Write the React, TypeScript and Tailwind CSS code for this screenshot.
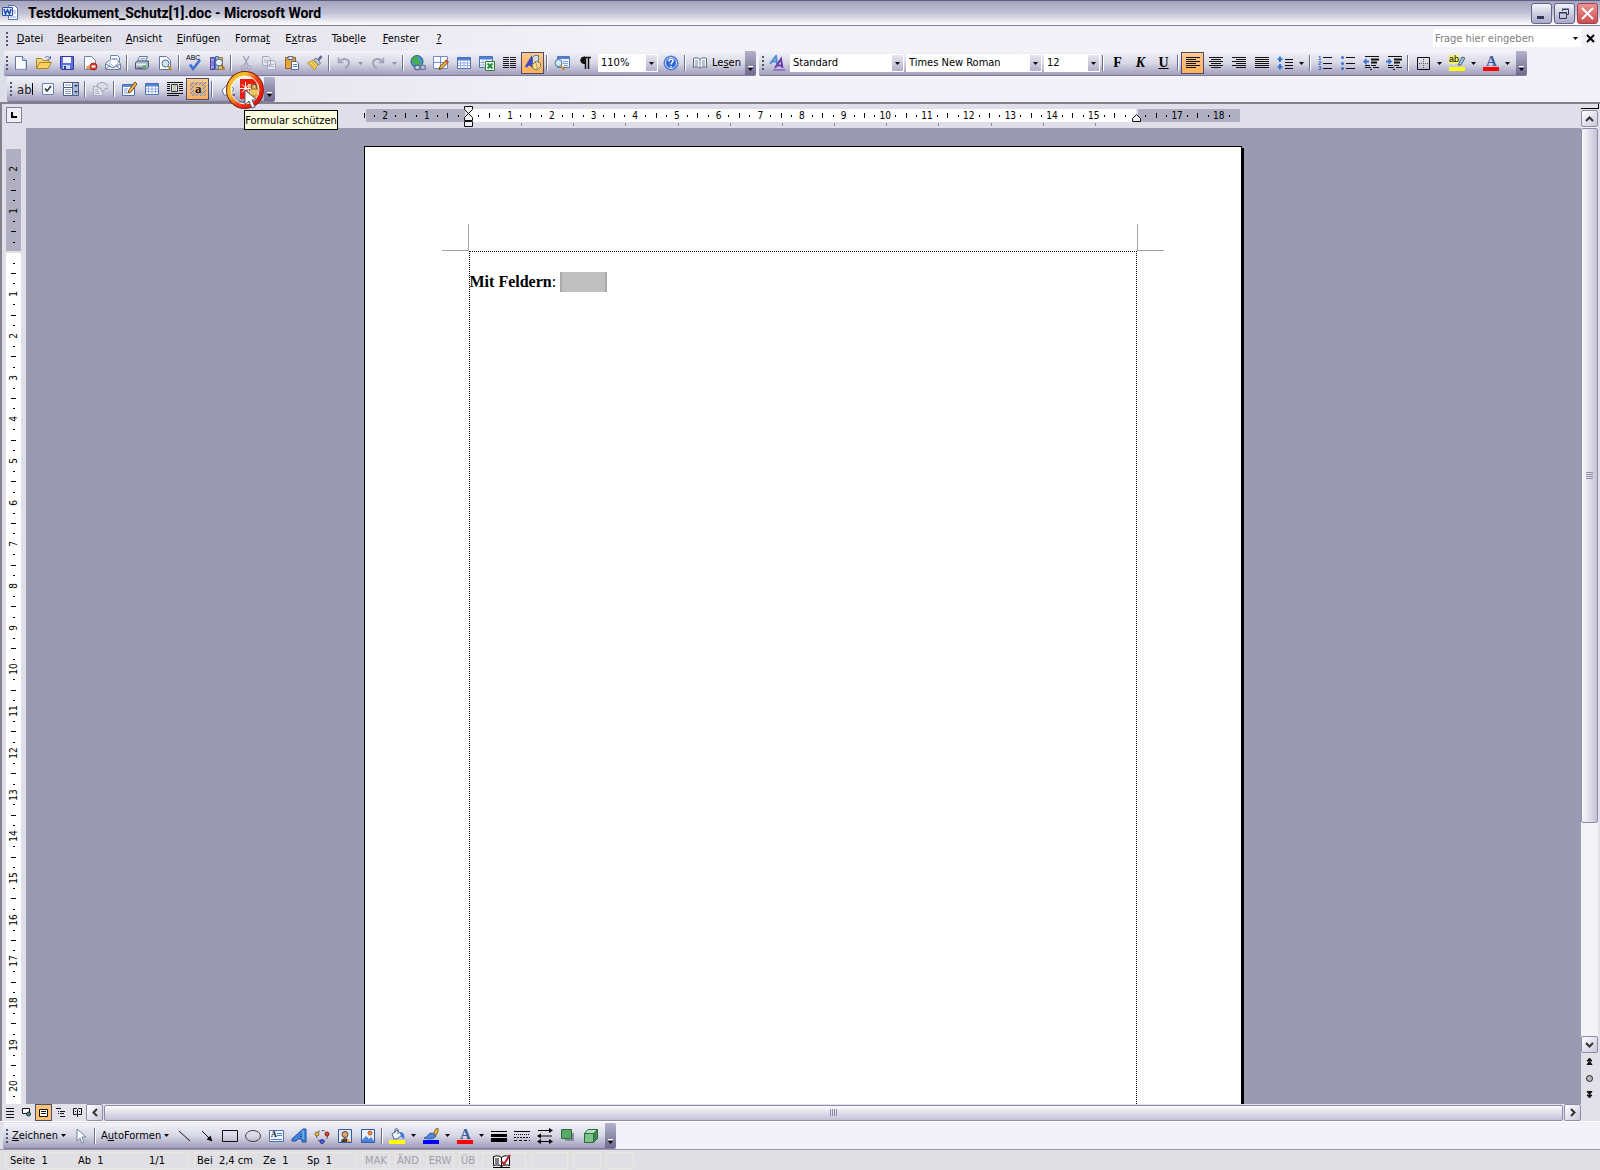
import type { ReactNode } from "react";

const Svg = ({ children, w = 16, h = 16 }: { children: ReactNode; w?: number; h?: number }) => (
  <svg width={w} height={h} viewBox={`0 0 ${w} ${h}`} fill="none" className="shrink-0" aria-hidden="true">
    {children}
  </svg>
);

const sheet = "M2.5 1.5h7l4 4v9h-11z";

const icons: Record<string, ReactNode> = {
  word: (
    <Svg>
      <path d="M6.500.5h6l3 3v11h-9z" fill="#fff" stroke="#4a6fb5" />
      <path d="M11 6h3M11 8h3M8 12h6" stroke="#7fa0d8" />
      <path d="M.5 2.500h10v8H.5z" fill="#dfe9fb" stroke="#2b56b0" />
      <path d="M2 4l1.500 5L5.500 5l2 4L9 4" stroke="#1c46a8" strokeWidth="1.500" />
    </Svg>
  ),
  neu: (
    <Svg>
      <path d={sheet} fill="#fff" stroke="#5f78a8" />
      <path d="M9.500 1.500v4h4" fill="#cddcf5" stroke="#5f78a8" />
      <path d="M12.500 6v8h-9" stroke="#b9c9e6" />
    </Svg>
  ),
  open: (
    <Svg>
      <path d="M.5 13.500v-10h5l1.500 2h6v3" fill="#f5d67b" stroke="#a8822a" />
      <path d="M.5 13.500l3-6h12l-3.500 6z" fill="#fbd05c" stroke="#a8822a" />
      <path d="M9 2.500c2-2 4-1 5 1M14.500 1v3h-3" stroke="#5574a8" />
    </Svg>
  ),
  save: (
    <Svg>
      <path d="M1.500 1.500h13v13h-12l-1-1z" fill="#5b6fe0" stroke="#3336a0" />
      <path d="M4 2h8v6H4z" fill="#f4f7ff" />
      <path d="M4 10h7v4H4z" fill="#cfd6e8" />
      <path d="M5 11h2v3H5z" fill="#2c3f8a" />
    </Svg>
  ),
  permission: (
    <Svg>
      <path d={sheet} fill="#fff" stroke="#7180a6" />
      <path d="M4 13c0-3 4-3 4-1v2H4z" fill="#e8a35a" />
      <circle cx="11.500" cy="11.500" r="3.500" fill="#d9402c" stroke="#a02618" />
      <path d="M9.500 11.500h4" stroke="#fff" strokeWidth="2" />
    </Svg>
  ),
  mail: (
    <Svg>
      <path d="M5.500.5h7l2 2v8h-9z" fill="#fff" stroke="#6b82ae" />
      <path d="M7 3.500h5M7 5.500h6" stroke="#8fb0e0" />
      <path d="M.5 8.500l3-3h9l3 3v6H.5z" fill="#e6edf8" stroke="#70809f" />
      <path d="M5 4.500h8v4l-4 3-4-3z" fill="#fff" stroke="#9eb4d8" />
      <path d="M1 9l7 4 7-4M1 14l4-3.500M15 14l-4-3.500" stroke="#70809f" />
    </Svg>
  ),
  print: (
    <Svg>
      <path d="M5.500 1.500h8l-2 5h-8z" fill="#fff" stroke="#5c78a8" />
      <path d="M6.500 3.500h5M5.500 5h5" stroke="#87a8de" />
      <path d="M1.500 7.500l2-1.500h11v6l-2 2h-11z" fill="#aab4c6" stroke="#49566f" />
      <path d="M2 8.500h10v2H2z" fill="#e6eaf2" />
      <path d="M9 11.500h3" stroke="#30b030" strokeWidth="2" />
      <path d="M3 13h6" stroke="#4a556c" />
    </Svg>
  ),
  preview: (
    <Svg>
      <path d={sheet} fill="#fff" stroke="#5f78a8" />
      <circle cx="8.500" cy="8.500" r="3.500" fill="#cfe6fa" stroke="#5a6d90" />
      <path d="M11 11l3.500 4" stroke="#c98a2c" strokeWidth="2" />
    </Svg>
  ),
  spell: (
    <Svg>
      <text x="0" y="5" fontSize="7" fontFamily="Liberation Sans, sans-serif" fill="#000">ABC</text>
      <path d="M4 9.500l3 4.500 7-9" stroke="#3a70d0" strokeWidth="2.500" />
    </Svg>
  ),
  research: (
    <Svg>
      <path d="M1.500 2.500h4v12h-4z" fill="#7f7ad8" stroke="#4a469a" />
      <path d="M2 5h3M2 12h3" stroke="#c9c6f6" />
      <path d="M6.500 1.500h3v13h-3z" fill="#8fb6ec" stroke="#4670a8" />
      <path d="M9.500 2.500h4v12h-4z" fill="#e2c56a" stroke="#9a7c30" />
      <circle cx="10" cy="7.500" r="3.500" fill="#e4f2ff" stroke="#4f6484" />
      <path d="M12.500 10l3 4.500" stroke="#a8742a" strokeWidth="2" />
    </Svg>
  ),
  cut: (
    <Svg>
      <path d="M5.500 1l4 9M11 1L6.500 10" stroke="#a3a3b8" strokeWidth="1.500" />
      <circle cx="5" cy="12.500" r="2" stroke="#a3a3b8" />
      <circle cx="11" cy="12.500" r="2" stroke="#a3a3b8" />
    </Svg>
  ),
  copy: (
    <Svg>
      <path d="M1.500 1.500h6l2 2v7h-8zM6.500 5.500h6l2 2v7h-8z" fill="#e6e6f0" stroke="#a8a8bd" />
      <path d="M8 9.500h5M8 11.500h5M3 5h3M3 7h3" stroke="#b4b4c8" />
    </Svg>
  ),
  paste: (
    <Svg>
      <path d="M1.500 2.500h10v11h-10z" fill="#e4a63a" stroke="#8c6420" />
      <path d="M4 1.500h5v3H4z" fill="#d9dbe8" stroke="#6a6a80" />
      <path d="M7.500 6.500h5l2 2v6h-7z" fill="#fff" stroke="#4a6496" />
      <path d="M9 9.500h4M9 11.500h4" stroke="#5880c8" />
    </Svg>
  ),
  painter: (
    <Svg>
      <path d="M11.500 5l3-4" stroke="#5d6592" strokeWidth="2.500" />
      <path d="M9 3l4.500 5-2 2-5-5z" fill="#c4c9da" stroke="#686e88" />
      <path d="M6 5l5 5-3.500 5L.5 8z" fill="#f4dc6c" stroke="#ac8c2c" />
      <path d="M3 8.500l4.500 4.500M5 7l4 4" stroke="#b89430" />
    </Svg>
  ),
  undo: (
    <Svg>
      <path d="M3 7c4-5 10-3 10 1 0 3-2 4-4 5" stroke="#a0a0b6" strokeWidth="2" />
      <path d="M2.500 2.500v5h5" stroke="#a0a0b6" strokeWidth="1.500" />
    </Svg>
  ),
  redo: (
    <Svg>
      <path d="M13 7C9 2 3 4 3 8c0 3 2 4 4 5" stroke="#a0a0b6" strokeWidth="2" />
      <path d="M13.500 2.500v5h-5" stroke="#a0a0b6" strokeWidth="1.500" />
    </Svg>
  ),
  link: (
    <Svg>
      <circle cx="7" cy="6.500" r="6" fill="#4d8fe0" stroke="#2d5f6c" />
      <path d="M3 3c3-3 6-2 5 1s3 1 3 3-3 1-3 5c-3-1-2-3-4-4S1 5 3 3z" fill="#45b045" />
      <rect x="4.500" y="10.500" width="6" height="4" rx="2" fill="#dde4f0" stroke="#53668c" strokeWidth="1.500" />
      <rect x="9.500" y="10.500" width="6" height="4" rx="2" stroke="#6e80a4" strokeWidth="1.500" />
    </Svg>
  ),
  drawTable: (
    <Svg>
      <path d="M.5 1.500h14v12H.5z" fill="#fff" stroke="#6e8cc8" />
      <path d="M7.500 1.500v12M.5 7.500h14" stroke="#6e8cc8" />
      <path d="M6 14.500l1-3 6-6 2 2-6 6z" fill="#f0b43c" stroke="#6b4a1c" />
      <path d="M12.500 5l2.500 2.500" stroke="#d04a34" strokeWidth="2" />
    </Svg>
  ),
  table: (
    <Svg>
      <path d="M1.500 2.500h13v11h-13z" fill="#fff" stroke="#4b70b8" />
      <path d="M2 3h12v2.500H2z" fill="#4f7edc" />
      <path d="M4.500 5.500v8M8 5.500v8M11.500 5.500v8M2 8h12M2 10.500h12" stroke="#97b2e2" />
    </Svg>
  ),
  excel: (
    <Svg>
      <path d="M.5 1.500h13v11H.5z" fill="#fff" stroke="#4b70b8" />
      <path d="M1 2h12v2.500H1z" fill="#4f7edc" />
      <path d="M4 4.500v8M8 4.500v8M1 7.500h12M1 10h12" stroke="#97b2e2" />
      <path d="M6.500 6.500h9v9h-9z" fill="#f2fff2" stroke="#2a7a35" />
      <path d="M8.500 8.500l5 5M13.500 8.500l-5 5" stroke="#2c8a3c" strokeWidth="2" />
    </Svg>
  ),
  columns: (
    <Svg>
      <path d="M1 2.500h6M1 4.500h6M1 6.500h6M1 8.500h6M1 10.500h6M1 12.500h6M8 2.500h6M8 4.500h6M8 6.500h6M8 8.500h6M8 10.500h6M8 12.500h6" stroke="#1a1a1a" />
    </Svg>
  ),
  drawing: (
    <Svg>
      <path d="M7.500 2l2-1.500h4v7l-2 1.500h-4z" fill="#d4dae8" stroke="#65749a" />
      <path d="M1 12L6 4l1 8M3 9.500h4" stroke="#4048c0" strokeWidth="2.500" />
      <path d="M7.500 9.500L11 6l4.500 2v3.500L12 15l-4.500-1.500z" fill="#f2dc8c" stroke="#8b7a4c" />
      <path d="M10 6.500l2 4L12 15" stroke="#a89460" />
    </Svg>
  ),
  docMap: (
    <Svg>
      <path d="M3.500 1.500h12v11h-12z" fill="#eef4ff" stroke="#5577b4" />
      <path d="M4 2h11v2H4z" fill="#4f80dc" />
      <path d="M9 6.500h5M9 8.500h5M10 10.500h4" stroke="#7ba0de" />
      <circle cx="4.500" cy="8" r="3.500" fill="#cdeef4" stroke="#56749a" />
      <path d="M7 11l3.500 4" stroke="#c98a2c" strokeWidth="2" />
    </Svg>
  ),
  para: (
    <Svg>
      <path d="M7 2.500h7M8.500 2v12M11.500 2v12" stroke="#111" strokeWidth="1.500" />
      <path d="M8 2H7a3 3 0 000 6.500h1z" fill="#111" stroke="#111" />
    </Svg>
  ),
  help: (
    <Svg>
      <circle cx="8" cy="8" r="7" fill="#2f68d8" stroke="#4f80d0" />
      <circle cx="8" cy="8" r="5.500" stroke="#dbe8ff" />
      <path d="M6 6.500c0-3 4-3 4-.5 0 1.500-2 1.500-2 3.500M8 11v1.500" stroke="#fff" strokeWidth="1.500" />
    </Svg>
  ),
  read: (
    <Svg>
      <path d="M1.500 3.500c2-1 5-1 6.500 1 1.500-2 4.500-2 6.500-1v9c-2-1-5-1-6.500 1-1.500-2-4.500-2-6.500-1z" fill="#f5f7fb" stroke="#5b6784" />
      <path d="M8 4v9M3 6h3M3 8h3M3 10h3M10 6h3M10 8h3M10 10h3" stroke="#7c8aa8" />
    </Svg>
  ),
  styles: (
    <Svg>
      <path d="M1 9L7 1l1 8M3.500 6.500H8" stroke="#4a8ed8" strokeWidth="2" />
      <path d="M6 13l6-9 1.500 9M8.500 10.500h5" stroke="#6b3fae" strokeWidth="2" />
      <path d="M4 15h12" stroke="#6b3fae" />
    </Svg>
  ),
  alignLeft: <Svg><path d="M1 2.500h14M1 4.500h10M1 6.500h14M1 8.500h10M1 10.500h14M1 12.500h10" stroke="#111" /></Svg>,
  alignCenter: <Svg><path d="M1 2.500h14M3 4.500h10M1 6.500h14M3 8.500h10M1 10.500h14M3 12.500h10" stroke="#111" /></Svg>,
  alignRight: <Svg><path d="M1 2.500h14M5 4.500h10M1 6.500h14M5 8.500h10M1 10.500h14M5 12.500h10" stroke="#111" /></Svg>,
  justify: <Svg><path d="M1 2.500h14M1 4.500h14M1 6.500h14M1 8.500h14M1 10.500h14M1 12.500h14" stroke="#111" /></Svg>,
  spacing: (
    <Svg>
      <path d="M8 4.500h8M8 7.500h8M8 10.500h8M8 13.500h8" stroke="#111" />
      <path d="M0 5l3-4 3 4zM0 11l3 4 3-4zM2 5h2v2H2zM2 9h2v2H2z" fill="#3970d0" />
    </Svg>
  ),
  numbered: (
    <Svg>
      <path d="M6 2.500h9M6 8.500h9M6 13.500h9" stroke="#111" />
      <text x="1" y="5" fontSize="6" fontFamily="Liberation Sans, sans-serif" fontWeight="700" fill="#2f62c4">1</text>
      <text x="1" y="10" fontSize="6" fontFamily="Liberation Sans, sans-serif" fontWeight="700" fill="#2f62c4">2</text>
      <text x="1" y="15" fontSize="6" fontFamily="Liberation Sans, sans-serif" fontWeight="700" fill="#2f62c4">3</text>
    </Svg>
  ),
  bullets: (
    <Svg>
      <path d="M6 2.500h9M6 8.500h9M6 13.500h9" stroke="#111" />
      <circle cx="2.500" cy="2.500" r="1.500" fill="#3970d0" />
      <circle cx="2.500" cy="8.500" r="1.500" fill="#3970d0" />
      <circle cx="2.500" cy="13.500" r="1.500" fill="#3970d0" />
    </Svg>
  ),
  dedent: (
    <Svg>
      <path d="M2 1.500h14M8 10.500h5M2 10.500h5M2 12.500h6M10 12.500h6M7 14.500h2" stroke="#111" />
      <path d="M8 4.500h8M8 7.500h6" stroke="#111" strokeWidth="2" />
      <path d="M0 6.500L3.500 3v2.500H6v2H3.500V10z" fill="#3970d0" />
    </Svg>
  ),
  indent: (
    <Svg>
      <path d="M2 1.500h14M8 10.500h5M2 10.500h5M2 12.500h6M10 12.500h6M7 14.500h2" stroke="#111" />
      <path d="M8 4.500h8M8 7.500h6" stroke="#111" strokeWidth="2" />
      <path d="M6 6.500L2.500 3v2.500H0v2h2.500V10z" fill="#3970d0" />
    </Svg>
  ),
  borders: (
    <Svg>
      <path d="M2.500 2.500h12v12h-12z" stroke="#111" />
      <path d="M8.500 4v9M4 8.500h9" stroke="#555" strokeDasharray="1 1" />
    </Svg>
  ),
  highlight: (
    <Svg>
      <path d="M0 0h10v9H0z" fill="#f4f36a" />
      <text x="0" y="7" fontSize="9" fontFamily="Liberation Sans, sans-serif" fill="#000">ab</text>
      <path d="M9 10l4-8 3 1-4 7z" fill="#9cc4e0" stroke="#4a6684" />
      <path d="M0 12h16v4H0z" fill="#ff0" />
    </Svg>
  ),
  fontColor: (
    <Svg>
      <text x="3" y="11" fontSize="15" fontFamily="Liberation Serif, serif" fontWeight="700" fill="#3c5c9e">A</text>
      <path d="M0 12h16v4H0z" fill="#f00" />
    </Svg>
  ),
  textField: (
    <Svg>
      <text x="0" y="13" fontSize="13" fontFamily="DejaVu Sans Condensed, sans-serif" fill="#222">ab</text>
      <path d="M15.500 2v12" stroke="#000" />
    </Svg>
  ),
  checkField: (
    <Svg>
      <path d="M2.500 2.500h11v11h-11z" fill="#f4f6fc" stroke="#6f86b0" />
      <path d="M5 7.500l2 2.500 4-5" stroke="#333" strokeWidth="1.500" />
    </Svg>
  ),
  dropField: (
    <Svg>
      <path d="M.5 1.500h15v5H.5z" fill="#fff" stroke="#4c5f88" />
      <path d="M.5 6.500h9v8h-9z" fill="#fff" stroke="#4c5f88" />
      <path d="M9.500 1.500h6v13h-6z" fill="#aebdda" stroke="#4c5f88" />
      <path d="M2 8.500h6M2 10.500h6M2 12.500h6M2 4h6" stroke="#8496ba" />
      <path d="M11 4h4l-2 2zM11 10h4l-2 2z" fill="#1f2d50" />
    </Svg>
  ),
  options: (
    <Svg>
      <path d="M1.500 5.500h9v9h-9z" fill="#e6e6f0" stroke="#a8a8bc" />
      <path d="M5 3.500l4-2h3l4 3v3h-3l-2 3-2-1V7H6z" fill="#dcdce8" stroke="#a0a0b6" />
      <path d="M3 10.500h4M3 12.500h5M3 8.500h3" stroke="#acacc0" />
    </Svg>
  ),
  editField: (
    <Svg>
      <path d="M1.500 3.500h12v11h-12z" fill="#fff" stroke="#4b70b8" />
      <path d="M2 4h11v2H2z" fill="#5b8ae0" />
      <path d="M3 8h4M3 10h3M3 12h4" stroke="#7b9cd8" />
      <path d="M7 12l1-3 6-8 2 2-6 8z" fill="#f4bd46" stroke="#6b4a1c" />
    </Svg>
  ),
  frame: (
    <Svg>
      <path d="M4.500 3.500h6v7h-6z" fill="#e4edda" stroke="#333" />
      <path d="M0 1.500h16M0 3.500h3M0 5.500h3M0 7.500h3M0 9.500h3M12 3.500h4M12 5.500h4M12 7.500h4M12 9.500h4M0 12.500h16M0 14.500h12" stroke="#111" />
      <path d="M6 5h3M6 7h3M6 9h3" stroke="#9aa890" />
    </Svg>
  ),
  shading: (
    <Svg>
      <path d="M0 1h16v14H0z" fill="#e4b47c" />
      <path d="M0 5l4-4M0 9l8-8M0 13l4-4M2 15l3-3M6 15l3-3M10 15l6-6M14 15l2-2M12 5l4-4M9 4l3-3M13 8l3-3" stroke="#5e86c8" />
      <path d="M4 4h8v8H4z" fill="#eebc84" />
      <text x="5" y="12" fontSize="13" fontFamily="Liberation Serif, serif" fontWeight="700" fill="#111">a</text>
    </Svg>
  ),
  reset: (
    <Svg>
      <path d="M3 9l6-6 6 5-6 6H5z" fill="#fff" stroke="#5878a8" />
      <path d="M9 14h7" stroke="#111" />
    </Svg>
  ),
  lock: (
    <Svg w={20} h={20}>
      <path d="M0 0h17v20H0z" fill="#ee1c10" />
      <path d="M8 5h12v14H8z" fill="#f4b47c" />
      <path d="M11.500 10V7.500c0-3.500 5-3.500 5 0V10" stroke="#6c5a30" strokeWidth="1.500" />
      <path d="M9.500 10h9v7h-9z" fill="#ecc75c" stroke="#8c6c2c" />
      <path d="M5.500 3v13M0 9.500h11M2 5.500l8 8M9 5.500l-7 8" stroke="#fff" />
    </Svg>
  ),
  pointer: <Svg><path d="M4 1v12l3-3 2 5 2-1-2-5h4z" fill="#fff" stroke="#6f83a6" /></Svg>,
  line: <Svg><path d="M3 3l11 10" stroke="#111" /></Svg>,
  arrow: <Svg><path d="M3 3l7 7" stroke="#111" /><path d="M13.500 13.500l-2-6-4 4z" fill="#111" /></Svg>,
  rect: <Svg><path d="M.5 2.500h15v11H.5z" stroke="#111" /></Svg>,
  ellipse: <Svg><ellipse cx="8" cy="8" rx="7.500" ry="5.500" stroke="#444" /></Svg>,
  textBox: (
    <Svg>
      <path d="M1.500 2.500h14v11h-14z" fill="#eaf3ff" stroke="#4f74b0" />
      <text x="3" y="9" fontSize="8" fontFamily="Liberation Serif, serif" fontWeight="700" fill="#111">A</text>
      <path d="M9 5.500h5M9 7.500h5M3 11.500h11" stroke="#5b7fc0" />
    </Svg>
  ),
  wordArt: (
    <Svg>
      <path d="M1 11L12 1h3v13h-4v-3H7l-2 2H1zM9 8.500h2V6z" fill="#3c86e0" stroke="#1f4c9c" />
      <path d="M12 2v9" stroke="#9cc8f8" />
    </Svg>
  ),
  diagram: (
    <Svg>
      <circle cx="8" cy="8" r="5.500" stroke="#445" strokeDasharray="3 2" />
      <circle cx="3" cy="6" r="2" fill="#e8c040" stroke="#866c20" />
      <circle cx="13" cy="6" r="2" fill="#d84030" stroke="#882418" />
      <circle cx="8" cy="13.500" r="2" fill="#4a60e0" stroke="#2a3890" />
    </Svg>
  ),
  clipArt: (
    <Svg>
      <path d="M1.500 1.500h13v13h-13z" fill="#dfe9f8" stroke="#2e5aa4" />
      <path d="M4 14c0-5 8-5 8 0z" fill="#4b3c30" />
      <circle cx="8" cy="6.500" r="3" fill="#e0a870" stroke="#5b4230" />
      <path d="M10 10l4 4h-4z" fill="#e8a040" />
    </Svg>
  ),
  picture: (
    <Svg>
      <path d="M1.500 1.500h13v13h-13z" fill="#e8f1ff" stroke="#2e5aa4" />
      <path d="M2 12l4-4 3 3 2-2 3 4v1H2z" fill="#4f83d8" />
      <circle cx="10" cy="5" r="2" fill="#f09040" stroke="#b85820" />
    </Svg>
  ),
  fill: (
    <Svg>
      <path d="M3 6l5-4 5 5-5 4H5z" fill="#f2f6fc" stroke="#4e648c" />
      <path d="M6 5V2c0-2 3-2 3 0v4" stroke="#4e648c" />
      <path d="M11 4c4 0 5 4 4 7-2-1-3-2-4-7z" fill="#3b78d8" />
      <path d="M0 12h16v4H0z" fill="#ff0" />
    </Svg>
  ),
  brush: (
    <Svg>
      <path d="M10.500 5l3-5 2 1-2 6z" fill="#f0bc40" stroke="#8b682a" />
      <path d="M1 10c3 0 4-5 8-5l4 3c-2 4-8 3-12 2z" fill="#4f88dc" stroke="#30589c" />
      <path d="M0 12h16v4H0z" fill="#00f" />
    </Svg>
  ),
  weight: <Svg><path d="M0 3.500h16" stroke="#000" /><path d="M0 7.500h16" stroke="#000" strokeWidth="3" /><path d="M0 12h16" stroke="#000" strokeWidth="4" /></Svg>,
  dashes: (
    <Svg>
      <path d="M0 3.500h16" stroke="#000" />
      <path d="M0 6.500h16" stroke="#000" strokeDasharray="1 1" />
      <path d="M0 9.500h16" stroke="#000" strokeDasharray="2 1" />
      <path d="M0 12.500h16" stroke="#000" strokeDasharray="3 2" />
    </Svg>
  ),
  arrows: (
    <Svg>
      <path d="M1 2.500h14M1 8h14M1 13.500h14" stroke="#000" />
      <path d="M12 0l4 2.500L12 5zM4 5.500L0 8l4 2.500zM12 11l4 2.500-4 2.500zM4 11l-4 2.500L4 16z" fill="#000" />
    </Svg>
  ),
  shadow: <Svg><path d="M5 5h9v8H5z" fill="#8a8aa0" /><path d="M1.500 1.500h10v9h-10z" fill="#58a868" stroke="#2c6c3c" /></Svg>,
  cube: (
    <Svg>
      <path d="M1.500 5.500h9v9h-9z" fill="#7cc48a" stroke="#2c6c3c" />
      <path d="M1.500 5.500l3.500-4h9.500l-4 4z" fill="#b4e0bc" stroke="#2c6c3c" />
      <path d="M10.500 5.500l4-4v9l-4 4z" fill="#3f8a50" stroke="#2c6c3c" />
    </Svg>
  ),
  proof: (
    <Svg w={20} h={14}>
      <path d="M1.500 2.500c3-1 6-1 8 1 2-2 5-2 8-1v9c-3-1-6-1-8 1-2-2-5-2-8-1z" fill="#fff" stroke="#000" />
      <path d="M9.500 3v10M3 5h4M3 7h4M3 9h4M1 13.500h17" stroke="#000" />
      <path d="M9 7l3 3 6-9" stroke="#b02020" strokeWidth="2" />
    </Svg>
  ),
};

const Grip = () => (
  <span className="mr-px flex w-[2px] shrink-0 flex-col gap-[2px]">
    {[0, 1, 2, 3].map((i) => (
      <span key={i} className="size-[2px] bg-[#54526e]" />
    ))}
  </span>
);

const Sep = () => <span className="mx-[2px] h-4 w-[2px] shrink-0 border-l border-r border-l-[#6e6d8f] border-r-white" />;

const Btn = ({ icon, label, active }: { icon: string; label: string; active?: boolean }) => (
  <button
    type="button"
    aria-label={label}
    className={
      active
        ? "flex h-[22px] w-[23px] shrink-0 items-center justify-center border border-[#4b4b6f] bg-linear-to-b from-[#ffc98b] to-[#ffb05a]"
        : "flex h-[22px] w-[23px] shrink-0 items-center justify-center"
    }
  >
    {icons[icon]}
  </button>
);

const Triangle = ({ muted }: { muted?: boolean }) => (
  <Svg w={5} h={3}>
    <path d="M0 0h5L2.500 3z" fill={muted ? "#9090a6" : "#000"} />
  </Svg>
);

const Drop = ({ label, muted }: { label: string; muted?: boolean }) => (
  <button type="button" aria-label={label} className="flex h-[22px] w-[11px] shrink-0 items-center justify-center">
    <Triangle muted={muted} />
  </button>
);

const Overflow = () => (
  <button
    type="button"
    aria-label="Optionen für Symbolleisten"
    className="flex w-[11px] shrink-0 flex-col items-center justify-end gap-px self-stretch rounded-r-[2px] bg-linear-to-b from-[#b4b2ca] to-[#6f6b8e] pb-1"
  >
    <span className="h-px w-[5px] bg-white" />
    <Triangle />
  </button>
);

const Combo = ({ label, value, width }: { label: string; value: string; width: string }) => (
  <span className={`relative ml-[2px] flex h-[18px] shrink-0 ${width}`}>
    <select aria-label={label} className="h-full w-full appearance-none bg-white pl-[3px] text-[11px] leading-4 outline-none">
      <option>{value}</option>
    </select>
    <span className="pointer-events-none absolute inset-y-px right-px flex w-[11px] items-center justify-center bg-linear-to-b from-[#e6e6f0] to-[#b3b1ca]">
      <Triangle />
    </span>
  </span>
);

const Letter = ({ label, text, style }: { label: string; text: string; style: string }) => (
  <button
    type="button"
    aria-label={label}
    className={`h-[22px] w-[23px] shrink-0 text-center font-['Liberation_Serif',serif] text-[14px] leading-[20px] font-bold ${style}`}
  >
    {text}
  </button>
);

const bar = "flex items-center border-b border-[#7c7aa0] bg-linear-to-b from-[#f3f3fa] via-[#d8d8e6] to-[#a09dbb] rounded-[2px]";

const menus = [
  { pre: "", key: "D", post: "atei", width: "w-[42px]" },
  { pre: "", key: "B", post: "earbeiten", width: "w-[67px]" },
  { pre: "", key: "A", post: "nsicht", width: "w-[52px]" },
  { pre: "", key: "E", post: "infügen", width: "w-[57px]" },
  { pre: "Forma", key: "t", post: "", width: "w-[51px]" },
  { pre: "E", key: "x", post: "tras", width: "w-[46px]" },
  { pre: "Tabe", key: "l", post: "le", width: "w-[50px]" },
  { pre: "", key: "F", post: "enster", width: "w-[54px]" },
  { pre: "", key: "?", post: "", width: "w-[22px]" },
];

const titleBtn = "flex size-[21px] items-center justify-center rounded-[3px] border";

const TitleBar = () => (
  <header className="flex h-[26px] shrink-0 items-center border-t border-b border-t-[#5f5d80] border-b-[#7b7b98] bg-linear-to-b from-[#a5a4bf] via-[#c2c1d4] to-white pl-[2px]">
    {icons.word}
    <h1 className="ml-[10px] flex-1 font-[Roboto,sans-serif] text-[14px] leading-5 font-bold">
      Testdokument_Schutz[1].doc - Microsoft Word
    </h1>
    <div className="flex gap-[2px] pr-[2px]">
      <button type="button" aria-label="Minimieren" className={`${titleBtn} border-[#62648c] bg-linear-to-b from-[#f4f4fa] to-[#a9a9c8]`}>
        <Svg w={13} h={13}><path d="M2 9h7v3H2z" fill="#33385c" /></Svg>
      </button>
      <button type="button" aria-label="Wiederherstellen" className={`${titleBtn} border-[#62648c] bg-linear-to-b from-[#f4f4fa] to-[#a9a9c8]`}>
        <Svg w={13} h={13}><path d="M4.500 4V2.500h6v5H9M4 2h7M1.500 5.500h7v6h-7zM1 6h8" stroke="#33385c" /></Svg>
      </button>
      <button type="button" aria-label="Schließen" className={`${titleBtn} border-[#a04048] bg-linear-to-b from-[#e89490] to-[#cc4c50]`}>
        <Svg w={13} h={13}><path d="M1 1l11 11M12 1L1 12" stroke="#fff" strokeWidth="2" /></Svg>
      </button>
    </div>
  </header>
);

const MenuBar = () => (
  <nav className="flex h-[25px] items-center pl-[6px]">
    <Grip />
    <div className="flex flex-1">
      {menus.map((m) => (
        <button key={m.key} type="button" className={`h-5 shrink-0 text-center ${m.width}`}>
          {m.pre}<u>{m.key}</u>{m.post}
        </button>
      ))}
    </div>
    <input aria-label="Frage hier eingeben" placeholder="Frage hier eingeben" className="mb-px h-[18px] w-[136px] bg-white px-[2px] outline-none placeholder:text-[#808080]" />
    <button type="button" aria-label="Fragen anzeigen" className="mb-px flex h-[18px] w-[12px] items-center justify-center bg-white"><Triangle /></button>
    <button type="button" aria-label="Fenster schließen" className="flex w-[19px] justify-center">
      <Svg w={9} h={9}><path d="M1 1l7 7M8 1L1 8" stroke="#000" strokeWidth="2" /></Svg>
    </button>
  </nav>
);

const StandardBar = () => (
  <div className={`${bar} pl-[2px]`}>
    <Grip />
    <Btn icon="neu" label="Neu" />
    <Btn icon="open" label="Öffnen" />
    <Btn icon="save" label="Speichern" />
    <Btn icon="permission" label="Berechtigung" />
    <Btn icon="mail" label="E-Mail" />
    <Sep />
    <Btn icon="print" label="Drucken" />
    <Btn icon="preview" label="Seitenansicht" />
    <Sep />
    <Btn icon="spell" label="Rechtschreibung" />
    <Btn icon="research" label="Recherchieren" />
    <Sep />
    <Btn icon="cut" label="Ausschneiden" />
    <Btn icon="copy" label="Kopieren" />
    <Btn icon="paste" label="Einfügen" />
    <Btn icon="painter" label="Format übertragen" />
    <Sep />
    <Btn icon="undo" label="Rückgängig" />
    <Drop label="Rückgängig Liste" muted />
    <Btn icon="redo" label="Wiederholen" />
    <Drop label="Wiederholen Liste" muted />
    <Sep />
    <Btn icon="link" label="Hyperlink" />
    <Btn icon="drawTable" label="Tabellen und Rahmen" />
    <Btn icon="table" label="Tabelle einfügen" />
    <Btn icon="excel" label="Excel-Tabelle einfügen" />
    <Btn icon="columns" label="Spalten" />
    <Btn icon="drawing" label="Zeichnen" active />
    <Sep />
    <Btn icon="docMap" label="Dokumentstruktur" />
    <Btn icon="para" label="Formatierungszeichen" />
    <Combo label="Zoom" value="110%" width="w-[60px]" />
    <span className="w-px" />
    <Btn icon="help" label="Hilfe" />
    <Sep />
    <button type="button" className="flex h-[22px] w-[57px] items-center justify-center gap-1">
      {icons.read}
      <span>Le<u>s</u>en</span>
    </button>
    <Overflow />
  </div>
);

const FormatBar = () => (
  <div className={`${bar} ml-[3px] pl-[3px]`}>
    <Grip />
    <Btn icon="styles" label="Formatvorlagen" />
    <Combo label="Formatvorlage" value="Standard" width="w-[114px]" />
    <Combo label="Schriftart" value="Times New Roman" width="w-[136px]" />
    <Combo label="Schriftgrad" value="12" width="w-[56px]" />
    <Sep />
    <Letter label="Fett" text="F" style="" />
    <Letter label="Kursiv" text="K" style="italic" />
    <Letter label="Unterstrichen" text="U" style="underline" />
    <Sep />
    <Btn icon="alignLeft" label="Linksbündig" active />
    <Btn icon="alignCenter" label="Zentriert" />
    <Btn icon="alignRight" label="Rechtsbündig" />
    <Btn icon="justify" label="Blocksatz" />
    <Btn icon="spacing" label="Zeilenabstand" />
    <Drop label="Zeilenabstand Liste" />
    <Sep />
    <Btn icon="numbered" label="Nummerierung" />
    <Btn icon="bullets" label="Aufzählungszeichen" />
    <Btn icon="dedent" label="Einzug verkleinern" />
    <Btn icon="indent" label="Einzug vergrößern" />
    <Sep />
    <Btn icon="borders" label="Rahmenlinie" />
    <Drop label="Rahmenlinie Liste" />
    <Btn icon="highlight" label="Hervorheben" />
    <Drop label="Hervorheben Liste" />
    <Btn icon="fontColor" label="Schriftfarbe" />
    <Drop label="Schriftfarbe Liste" />
    <span className="w-[3px]" />
    <Overflow />
  </div>
);

const FormBar = () => (
  <div className={`${bar} relative ml-[7px] h-[25px] w-[268px] pl-[3px]`}>
    <Grip />
    <Btn icon="textField" label="Textformularfeld" />
    <Btn icon="checkField" label="Kontrollkästchen" />
    <Btn icon="dropField" label="Dropdown" />
    <Sep />
    <Btn icon="options" label="Formularfeldoptionen" />
    <Sep />
    <Btn icon="editField" label="Tabelle zeichnen" />
    <Btn icon="table" label="Tabelle einfügen" />
    <Btn icon="frame" label="Positionsrahmen einfügen" />
    <Btn icon="shading" label="Formularfeld-Schattierung" active />
    <Sep />
    <Btn icon="reset" label="Formularfelder zurücksetzen" />
    <Btn icon="lock" label="Formular schützen" />
    <span className="flex-1" />
    <Overflow />
    {/* click marker, mouse pointer and tooltip */}
    <span className="pointer-events-none absolute -top-[7px] left-[218px] z-20">
      <Svg w={40} h={40}>
        <defs>
          <linearGradient id="ring" x1="4" y1="6" x2="36" y2="30" gradientUnits="userSpaceOnUse">
            <stop offset=".3" stopColor="#f8bc28" />
            <stop offset=".6" stopColor="#f04018" />
            <stop offset="1" stopColor="#f80808" />
          </linearGradient>
        </defs>
        <circle cx="20" cy="20" r="18" stroke="#7c2010" strokeWidth="2" />
        <circle cx="20" cy="20" r="16" stroke="url(#ring)" strokeWidth="4" />
        <circle cx="20" cy="20" r="14" stroke="#fff6d8" />
        <path d="M20 20v15l4-4 3 7 3-1-3-7h5z" fill="#fff" stroke="#55576e" />
      </Svg>
    </span>
    <span role="tooltip" className="absolute top-[33px] left-[237px] z-30 flex h-5 w-[94px] items-center justify-center border border-black bg-[#ffffe1] pt-px whitespace-nowrap">
      Formular schützen
    </span>
  </div>
);

// ruler marks sit every quarter centimetre
const marks = (from: number, to: number) => Array.from({ length: to - from + 1 }, (_, i) => from + i);

const HorizontalRuler = () => (
  <div className="flex h-6 flex-1 justify-center pt-[5px]">
    <div className="relative h-[13px] w-[877px] shrink-0 bg-[linear-gradient(to_right,#e0dfe9_0_1px,#b0afc1_1px_100px,#e0dfe9_100px_104px,#fff_104px_771px,#e0dfe9_771px_773px,#b0afc1_773px_875px,#e0dfe9_875px)]">
      <div className="-ml-[6px] flex h-full w-[875px]">
        {marks(-10, 73).map((k) => (
          <span key={k} className="flex w-0 flex-1 items-center justify-center">
            {k === 0 || k === 64 ? null : k % 4 === 0 ? (
              <span className="text-[10px] leading-3">{Math.abs(k / 4)}</span>
            ) : (
              <span className={k % 2 === 0 ? "h-[5px] w-px bg-black" : "h-[2px] w-px bg-black"} />
            )}
          </span>
        ))}
      </div>
      <span className="absolute -top-[3px] left-[99px]">
        <Svg w={10} h={22}>
          <path d="M.5.5h8v3l-4 4-4-4zM.5 14.500v-3l4-4 4 4v3zM.5 15.500h8v5h-8z" fill="#f0f0f4" stroke="#111" />
        </Svg>
      </span>
      <span className="absolute top-[5px] left-[767px]">
        <Svg w={10} h={8}><path d="M.5 7.500v-3l4-4 4 4v3z" fill="#f0f0f4" stroke="#111" /></Svg>
      </span>
      <div className="ml-[156px] flex w-[575px] justify-between pt-px">
        {marks(0, 11).map((k) => (
          <span key={k} className="h-[3px] w-px bg-[#8a8aa0]" />
        ))}
      </div>
    </div>
  </div>
);

const VerticalRuler = () => (
  <div className="w-6 shrink-0 overflow-hidden bg-[#e0dfe9] pt-[21px] pl-1">
    <div className="h-[958px] w-[15px] bg-[linear-gradient(to_bottom,#b0afc1_0_102px,#e0dfe9_102px_104px,#fff_104px)] pt-[15px]">
      <div className="flex h-[938px] flex-col">
        {marks(-8, 81).map((k) => (
          <span key={k} className="flex h-0 flex-1 items-center justify-center">
            {k === 0 ? null : k % 4 === 0 ? (
              <span className="-rotate-90 text-[10px] leading-3">{Math.abs(k / 4)}</span>
            ) : (
              <span className={k % 2 === 0 ? "h-px w-[5px] bg-black" : "h-px w-[2px] bg-black"} />
            )}
          </span>
        ))}
      </div>
    </div>
  </div>
);

const Page = () => (
  <main className="flex min-w-0 flex-1 justify-center overflow-hidden bg-[#9a9ab1] pt-[18px]">
    <div className="flex w-[880px] shrink-0">
      <article className="flex flex-1 flex-col border-x border-t border-black bg-white px-[77px]">
        <div className="mt-[77px] flex h-[27px] shrink-0 justify-between">
          <span className="w-[27px] border-r border-b border-[#a5a5a5]" />
          <span className="w-[27px] border-b border-l border-[#a5a5a5]" />
        </div>
        <div className="mx-[27px] flex-1 border-t border-r border-l border-dotted border-black pt-[19px]">
          <label className="flex items-center font-['Liberation_Serif',serif] text-[16px] leading-[22px]">
            <span><b>Mit Feldern</b>:</span>
            <input readOnly className="ml-1 h-5 w-[47px] border-x-2 border-[#a9a9a9] bg-[#c0c0c0] outline-none" />
          </label>
        </div>
      </article>
      <span className="mt-[2px] w-[2px] bg-black" />
    </div>
  </main>
);

const scrollBtn = "flex size-[17px] shrink-0 items-center justify-center rounded-[2px] border border-[#8e8ca8] bg-linear-to-br from-white to-[#c9c8da]";

const VerticalScroll = () => (
  <div className="flex w-[19px] shrink-0 flex-col bg-[#e2e1e9]">
    <span className="mr-px h-[5px] border-r border-b border-black bg-[#e2e1e9]" />
    <button type="button" aria-label="Nach oben" className={`${scrollBtn} mt-px`}>
      <Svg w={9} h={6}><path d="M1 5l3.500-3.500L8 5" stroke="#333" strokeWidth="2" /></Svg>
    </button>
    <div className="flex w-[17px] flex-1 flex-col bg-[#f3f3f8]">
      <span className="mt-px flex h-[695px] flex-col items-center justify-center gap-px rounded-[2px] border border-[#8e8ca8] bg-linear-to-r from-[#fafafd] to-[#c4c3d6]">
        {[0, 1, 2, 3].map((i) => <span key={i} className="h-px w-[7px] bg-[#8e8ca8]" />)}
      </span>
    </div>
    <button type="button" aria-label="Nach unten" className={scrollBtn}>
      <Svg w={9} h={6}><path d="M1 1l3.500 3.500L8 1" stroke="#333" strokeWidth="2" /></Svg>
    </button>
    <button type="button" aria-label="Vorherige Seite" className="flex h-[17px] w-[17px] items-center justify-center">
      <Svg w={7} h={7}><path d="M3.500 0L6 3H1zM3.500 3.500L6 6.500H1z" fill="#111" stroke="#111" /></Svg>
    </button>
    <button type="button" aria-label="Browseobjekt auswählen" className="flex h-4 w-[17px] items-center justify-center">
      <Svg w={7} h={7}><circle cx="3.500" cy="3.500" r="3" fill="#b8b8bc" stroke="#222" /></Svg>
    </button>
    <button type="button" aria-label="Nächste Seite" className="flex h-[17px] w-[17px] items-center justify-center">
      <Svg w={7} h={7}><path d="M3.500 3.500L1 .5h5zM3.500 7L1 4h5z" fill="#111" stroke="#111" /></Svg>
    </button>
    <span className="h-[18px]" />
  </div>
);

const viewBtn = "flex h-[17px] w-[17px] shrink-0 items-center justify-center";

const HorizontalScroll = () => (
  <div className="flex h-[17px] items-center bg-[#e2e1e9]">
    <button type="button" aria-label="Normalansicht" className="flex size-4 shrink-0 items-center justify-center"><Svg w={8} h={10}><path d="M0 .5h8M0 3.500h8M0 6.500h8M0 9.500h8" stroke="#111" /></Svg></button>
    <button type="button" aria-label="Weblayout" className={viewBtn}><Svg w={9} h={9}><path d="M.5.500h7v5h-7z" fill="#fff" stroke="#111" /><circle cx="6.500" cy="6" r="2" fill="#3b9a5a" stroke="#226" /></Svg></button>
    <button type="button" aria-label="Seitenlayout" className={`${viewBtn} border border-[#4b4b6f] bg-[#ffc070]`}><Svg w={9} h={8}><path d="M.5.500h8v7h-8z" fill="#fff" stroke="#111" /><path d="M2 2.500h5M2 4.500h5" stroke="#111" /></Svg></button>
    <button type="button" aria-label="Gliederung" className={viewBtn}><Svg w={9} h={9}><path d="M0 .5h5M2 3.500h1M4 3.500h5M2 5.500h1M4 5.500h4M4 8.500h5" stroke="#111" /></Svg></button>
    <button type="button" aria-label="Lesemodus" className={viewBtn}><Svg w={9} h={9}><path d="M.5.500h3l1 1 1-1h3v6h-3l-1 1-1-1h-3zM4.500 2v7M2 3.500h1M6 3.500h1" stroke="#111" /></Svg></button>
    <button type="button" aria-label="Nach links" className={scrollBtn}>
      <Svg w={6} h={9}><path d="M5 1L1.500 4.500 5 8" stroke="#333" strokeWidth="2" /></Svg>
    </button>
    <span className="mx-px flex h-4 flex-1 items-center justify-center gap-px rounded-[2px] border border-[#8e8ca8] bg-linear-to-b from-[#fafafd] to-[#c4c3d6]">
      {[0, 1, 2, 3].map((i) => <span key={i} className="h-[7px] w-px bg-[#8e8ca8]" />)}
    </span>
    <button type="button" aria-label="Nach rechts" className={scrollBtn}>
      <Svg w={6} h={9}><path d="M1 1l3.500 3.500L1 8" stroke="#333" strokeWidth="2" /></Svg>
    </button>
  </div>
);

const DrawBar = () => (
  <div className="flex h-[29px] shrink-0 border-t border-b border-t-white border-b-[#9a9aa8] bg-linear-to-r from-[#dedee9] to-[#f3f2f8] to-40% pt-px pl-[3px]">
    <div className={`${bar} pl-[3px]`}>
      <Grip />
      <button type="button" className="flex h-[22px] w-[60px] items-center justify-between px-[3px]"><span><u>Z</u>eichnen</span><Triangle /></button>
      <Btn icon="pointer" label="Objekte markieren" />
      <Sep />
      <button type="button" className="flex h-[22px] w-[74px] items-center justify-between px-[3px]"><span>A<u>u</u>toFormen</span><Triangle /></button>
      <Btn icon="line" label="Linie" />
      <Btn icon="arrow" label="Pfeil" />
      <Btn icon="rect" label="Rechteck" />
      <Btn icon="ellipse" label="Ellipse" />
      <Btn icon="textBox" label="Textfeld" />
      <Btn icon="wordArt" label="WordArt einfügen" />
      <Btn icon="diagram" label="Schematische Darstellung" />
      <Btn icon="clipArt" label="ClipArt einfügen" />
      <Btn icon="picture" label="Grafik einfügen" />
      <Sep />
      <Btn icon="fill" label="Füllfarbe" />
      <Drop label="Füllfarbe Liste" />
      <Btn icon="brush" label="Linienfarbe" />
      <Drop label="Linienfarbe Liste" />
      <Btn icon="fontColor" label="Schriftfarbe" />
      <Drop label="Schriftfarbe Liste" />
      <Btn icon="weight" label="Linienart" />
      <Btn icon="dashes" label="Strichart" />
      <Btn icon="arrows" label="Pfeilart" />
      <Btn icon="shadow" label="Schattenart" />
      <Btn icon="cube" label="3D-Art" />
      <span className="w-[3px]" />
      <Overflow />
    </div>
  </div>
);

const cell = "flex h-[17px] shrink-0 items-center border border-[#ebe9df] pt-px";

const StatusBar = () => (
  <footer className="flex h-5 shrink-0 items-end gap-[5px] bg-[#e0dfe4] pb-px pl-[5px] whitespace-nowrap">
    <div className={`${cell} w-[184px] pl-[4px]`}>
      <span className="w-[68px]">Seite&nbsp; 1</span>
      <span className="w-[71px]">Ab&nbsp; 1</span>
      <span>1/1</span>
    </div>
    <div className={`${cell} w-[163px] pl-[2px]`}>
      <span className="w-[66px]">Bei&nbsp; 2,4 cm</span>
      <span className="w-[44px]">Ze&nbsp; 1</span>
      <span>Sp&nbsp; 1</span>
    </div>
    <div className={`${cell} w-[28px] justify-center text-[#a09fa8]`}>MAK</div>
    <div className={`${cell} w-[26px] justify-center text-[#a09fa8]`}>ÄND</div>
    <div className={`${cell} w-[28px] justify-center text-[#a09fa8]`}>ERW</div>
    <div className={`${cell} w-[18px] justify-center text-[#a09fa8]`}>ÜB</div>
    <div className={`${cell} w-[44px] justify-center pr-1`}>{icons.proof}</div>
    <div className={`${cell} w-[37px]`} />
    <div className={`${cell} w-[28px]`} />
    <div className={`${cell} w-[28px]`} />
  </footer>
);

const App = () => (
  <div className="flex h-screen flex-col overflow-hidden bg-[#e0dfe9] font-['DejaVu_Sans_Condensed','DejaVu_Sans',sans-serif] text-[11px] leading-4 text-black">
    <TitleBar />
    <div className="flex shrink-0 flex-col gap-px bg-linear-to-r from-[#dedee9] to-[#f3f2f8] to-40%">
      <MenuBar />
      <div className="-mt-px flex h-[25px] items-stretch pl-1">
        <StandardBar />
        <FormatBar />
      </div>
      <FormBar />
    </div>
    <div className="flex min-h-0 flex-1 border-t-2 border-l-2 border-[#83828c]">
      <div className="flex min-w-0 flex-1 flex-col">
        <div className="flex h-6 shrink-0">
          <div className="flex w-6 justify-center pt-[3px]">
            <button type="button" aria-label="Tabstopp" className="flex size-4 items-center justify-center border border-[#7d7b99] bg-[#efeef5]">
              <Svg w={6} h={6}><path d="M1 0v5h5" stroke="#000" strokeWidth="2" /></Svg>
            </button>
          </div>
          <HorizontalRuler />
        </div>
        <div className="flex min-h-0 flex-1">
          <VerticalRuler />
          <Page />
        </div>
        <HorizontalScroll />
      </div>
      <VerticalScroll />
    </div>
    <DrawBar />
    <StatusBar />
  </div>
);

export default App;
